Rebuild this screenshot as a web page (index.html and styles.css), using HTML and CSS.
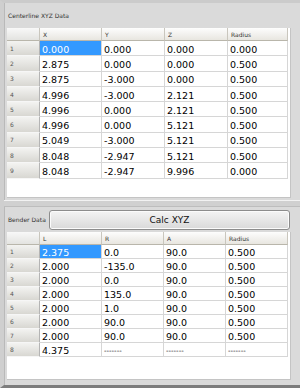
FILE: index.html
```html
<!DOCTYPE html>
<html>
<head>
<meta charset="utf-8">
<link rel="stylesheet" href="styles.css">
</head>
<body>
<div class="app">
  <section class="pane pane-top">
    <div class="pane-head"><span class="pane-label">Centerline XYZ Data</span></div>
    <div class="table-box tall">
      <div class="grid grid-top">
        <div class="hcell corner"></div><div class="hcell">X</div><div class="hcell">Y</div><div class="hcell">Z</div><div class="hcell">Radius</div>
        <div class="rcell">1</div><div class="cell sel">0.000</div><div class="cell">0.000</div><div class="cell">0.000</div><div class="cell">0.000</div>
        <div class="rcell">2</div><div class="cell">2.875</div><div class="cell">0.000</div><div class="cell">0.000</div><div class="cell">0.500</div>
        <div class="rcell">3</div><div class="cell">2.875</div><div class="cell">-3.000</div><div class="cell">0.000</div><div class="cell">0.500</div>
        <div class="rcell">4</div><div class="cell">4.996</div><div class="cell">-3.000</div><div class="cell">2.121</div><div class="cell">0.500</div>
        <div class="rcell">5</div><div class="cell">4.996</div><div class="cell">0.000</div><div class="cell">2.121</div><div class="cell">0.500</div>
        <div class="rcell">6</div><div class="cell">4.996</div><div class="cell">0.000</div><div class="cell">5.121</div><div class="cell">0.500</div>
        <div class="rcell">7</div><div class="cell">5.049</div><div class="cell">-3.000</div><div class="cell">5.121</div><div class="cell">0.500</div>
        <div class="rcell">8</div><div class="cell">8.048</div><div class="cell">-2.947</div><div class="cell">5.121</div><div class="cell">0.500</div>
        <div class="rcell">9</div><div class="cell">8.048</div><div class="cell">-2.947</div><div class="cell">9.996</div><div class="cell">0.000</div>
      </div>
    </div>
  </section>
  <div class="splitter"></div>
  <section class="pane pane-bottom">
    <div class="pane-head tool">
      <span class="pane-label fixed">Bender Data</span>
      <button class="calc-btn">Calc XYZ</button>
    </div>
    <div class="table-box short">
      <div class="grid grid-bottom">
        <div class="hcell corner"></div><div class="hcell">L</div><div class="hcell">R</div><div class="hcell">A</div><div class="hcell">Radius</div>
        <div class="rcell">1</div><div class="cell sel">2.375</div><div class="cell">0.0</div><div class="cell">90.0</div><div class="cell">0.500</div>
        <div class="rcell">2</div><div class="cell">2.000</div><div class="cell">-135.0</div><div class="cell">90.0</div><div class="cell">0.500</div>
        <div class="rcell">3</div><div class="cell">2.000</div><div class="cell">0.0</div><div class="cell">90.0</div><div class="cell">0.500</div>
        <div class="rcell">4</div><div class="cell">2.000</div><div class="cell">135.0</div><div class="cell">90.0</div><div class="cell">0.500</div>
        <div class="rcell">5</div><div class="cell">2.000</div><div class="cell">1.0</div><div class="cell">90.0</div><div class="cell">0.500</div>
        <div class="rcell">6</div><div class="cell">2.000</div><div class="cell">90.0</div><div class="cell">90.0</div><div class="cell">0.500</div>
        <div class="rcell">7</div><div class="cell">2.000</div><div class="cell">90.0</div><div class="cell">90.0</div><div class="cell">0.500</div>
        <div class="rcell">8</div><div class="cell">4.375</div><div class="cell dash">-------</div><div class="cell dash">-------</div><div class="cell dash">-------</div>
      </div>
    </div>
  </section>
</div>
</body>
</html>
```

FILE: styles.css
```css
* { box-sizing: border-box; }
html, body { margin: 0; padding: 0; }
body {
  width: 300px;
  height: 388px;
  overflow: hidden;
  background: #d2d2d2;
  font-family: "DejaVu Sans", Verdana, sans-serif;
}
.app {
  width: 300px;
  height: 388px;
  display: flex;
  flex-direction: column;
  background: #d6d6d6;
  border-left: 4px solid #cfcfcf;
  border-top: 3px solid #cbcbcb;
  border-bottom: 3px solid #7d7d7d;
}
.pane {
  display: flex;
  flex-direction: column;
  background: #dadada;
  border-left: 1px solid #b9b9b9;
  padding-left: 2px;
  padding-right: 9px;
}
.pane-top { height: 197px; }
.splitter {
  height: 7px;
  background: #d0d0d0;
  border-top: 1px solid #f2f2f2;
  border-bottom: 1px solid #bdbdbd;
}
.pane-bottom { flex: 1; }
.pane-head {
  height: 25px;
  flex: none;
  display: flex;
  align-items: center;
}
.pane-label {
  font-size: 6px;
  color: #333;
  padding-left: 1px;
  white-space: nowrap;
}
.fixed {
  width: 42px;
  flex: none;
}
.calc-btn {
  margin: 0;
  width: 241px;
  height: 20px;
  padding: 0;
  font-family: "DejaVu Sans", Verdana, sans-serif;
  font-size: 9px;
  color: #111;
  background: linear-gradient(#f4f4f4, #d9d9d9);
  border: 1px solid #8c8c8c;
  border-radius: 3px;
  box-shadow: inset 0 0 0 1px #fbfbfb;
}
.table-box {
  flex: none;
  background: #fff;
  width: 284px;
  border-right: 1px solid #c4c4c4;
  border-bottom: 1px solid #c4c4c4;
}
.tall { height: 170px; }
.short { height: 148px; }
.grid {
  display: grid;
  grid-template-columns: 33px 62px 63px 63px 60px;
}
.grid-top { grid-template-rows: 13px repeat(9, 15.3px); }
.grid-bottom {
  grid-template-columns: 33px 62px 62px 62px 62px;
  grid-template-rows: 13px repeat(8, 14px);
}
.hcell {
  font-size: 6px;
  color: #333;
  padding-left: 3px;
  display: flex;
  align-items: center;
  background: linear-gradient(#fdfdfd, #e8e6e0);
  border-right: 1px solid #c9c6bd;
  border-bottom: 1px solid #b9b6ab;
}
.corner { background: linear-gradient(#f8f8f8, #e3e3e0); }
.rcell {
  font-size: 6px;
  color: #555;
  padding-left: 3px;
  display: flex;
  align-items: center;
  background: linear-gradient(#f3f3f1, #d8d7d2);
  border-right: 1px solid #b4b4b4;
  border-bottom: 1px solid #f6f6f6;
}
.cell {
  font-size: 9.5px;
  color: #000;
  padding-left: 2px;
  padding-top: 2px;
  display: flex;
  align-items: center;
  border-right: 1px solid #d6d6d6;
  border-bottom: 1px solid #d6d6d6;
  white-space: nowrap;
}
.sel {
  background: #3399ff;
  color: #fff;
}
.dash { font-size: 7px; }
```
